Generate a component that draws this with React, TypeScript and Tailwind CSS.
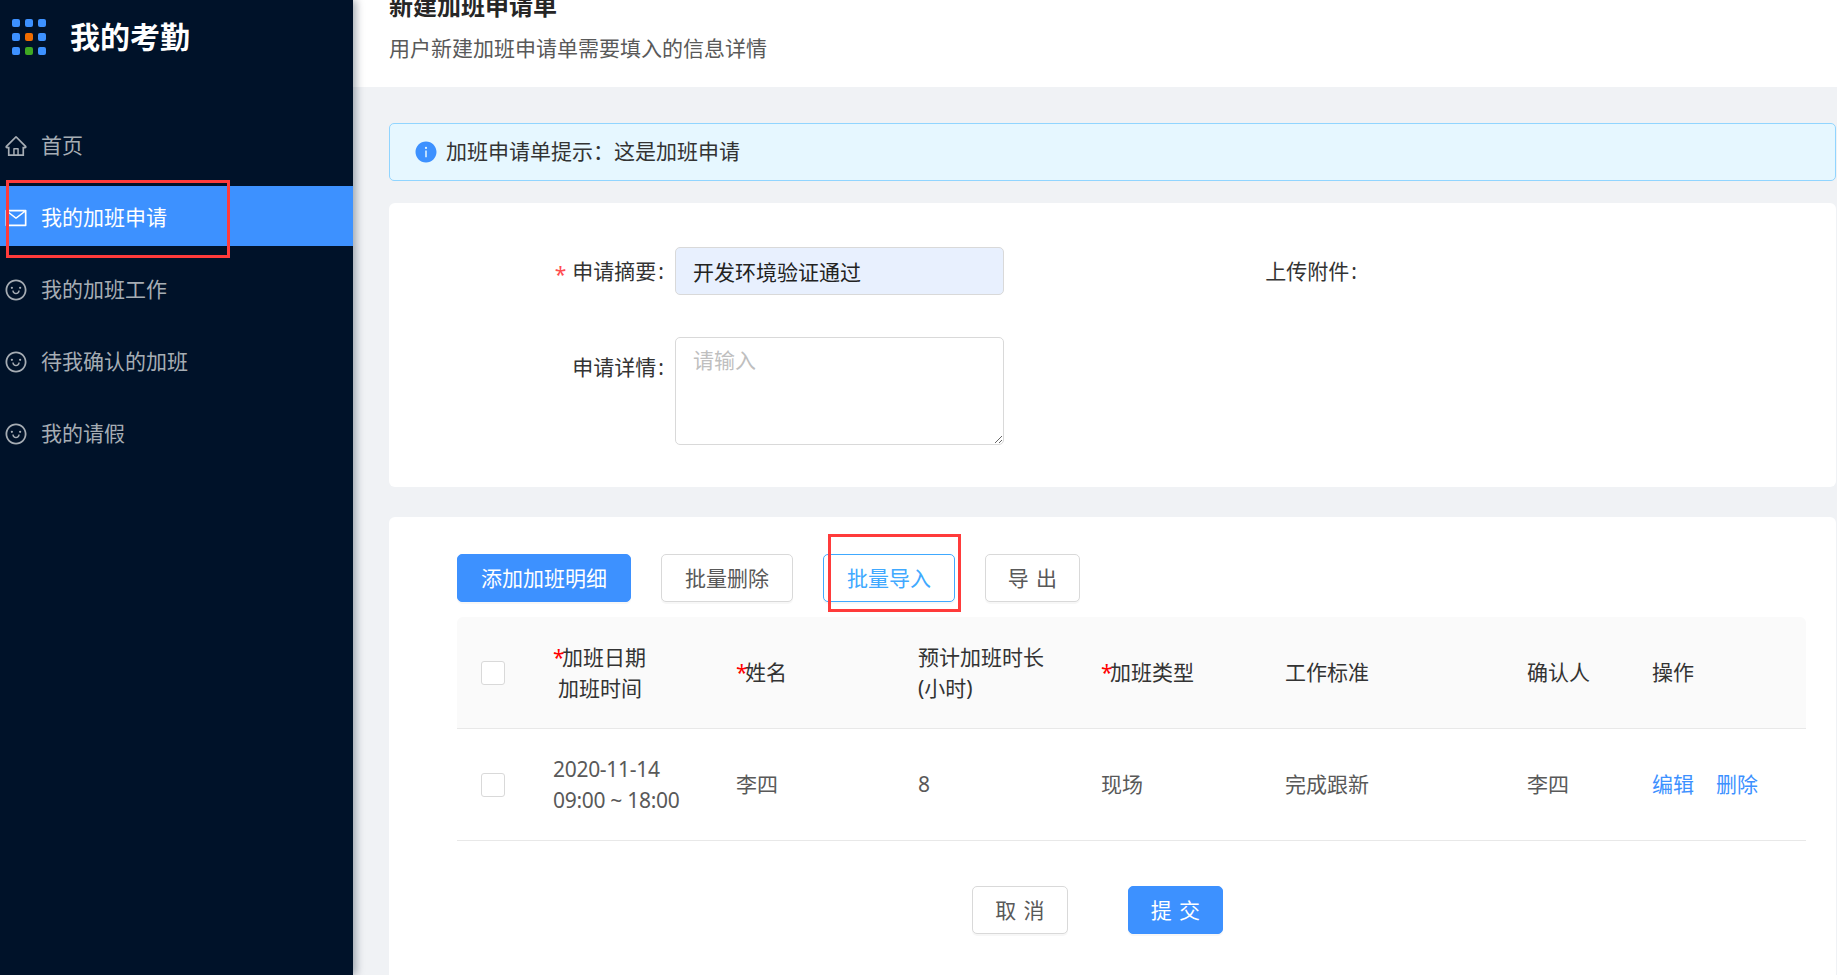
import React from "react";
import { AiOutlineHome, AiOutlineMail, AiOutlineSmile, AiFillInfoCircle } from "react-icons/ai";

const navItems = [
  { label: "首页", icon: AiOutlineHome },
  { label: "我的加班申请", icon: AiOutlineMail, active: true },
  { label: "我的加班工作", icon: AiOutlineSmile },
  { label: "待我确认的加班", icon: AiOutlineSmile },
  { label: "我的请假", icon: AiOutlineSmile },
];

const dots = [
  "bg-[#3d91ff]", "bg-[#3d91ff]", "bg-[#3d91ff]",
  "bg-[#3d91ff]", "bg-[#f06c00]", "bg-[#3d91ff]",
  "bg-[#3d91ff]", "bg-[#3fa822]", "bg-[#3d91ff]",
];

const rowGrid = "grid grid-cols-[72px_183px_182px_183px_184px_242px_125px_178px] items-center";

const Required = () => <span className="inline-block w-[9px] text-[#ff0000]">*</span>;

const Colon = () => <span className="ml-[2px]">:</span>;

const Checkbox = () => (
  <div className="ml-6 h-6 w-6 rounded-[3px] border border-[#d9d9d9] bg-white" />
);

const Button = ({ className, children }: { className: string; children: React.ReactNode }) => (
  <button className={`flex h-12 items-center justify-center rounded-[5px] border pt-[2px] text-[21px] shadow-[0_2px_0_rgba(0,0,0,0.03)] ${className}`}>
    {children}
  </button>
);

const Sidebar = () => (
  <aside className="relative z-10 flex h-full w-[353px] shrink-0 flex-col bg-[#001229] shadow-[3px_0_8px_rgba(0,21,41,0.35)]">
    <div className="flex h-[74px] items-center pl-3">
      <div className="grid grid-cols-[8px_8px_8px] gap-x-[5px] gap-y-[6px]">
        {dots.map((color, i) => (
          <span key={i} className={`h-2 w-2 rounded-[2px] ${color}`} />
        ))}
      </div>
      <span className="ml-[24px] text-[30px] font-bold leading-none text-white">我的考勤</span>
    </div>
    <nav className="mt-[40px] flex flex-col gap-3">
      {navItems.map(({ label, icon: Icon, active }) => (
        <div
          key={label}
          className={`flex h-[60px] items-center pl-[4px] pt-[3px] text-[21px] ${
            active ? "bg-[#3d91ff] text-white" : "text-[#a6adb4]"
          }`}
        >
          <Icon className="h-6 w-6" />
          <span className="ml-[13px]">{label}</span>
        </div>
      ))}
    </nav>
    <div className="absolute left-[6px] top-[180px] h-[78px] w-[224px] border-[3px] border-[#ff3b3b]" />
  </aside>
);

const FormCard = () => (
  <section className="mt-[22px] rounded-md bg-white pb-[42px] pt-[44px] text-[#333]">
    <div className="flex h-12 items-center text-[21px]">
      <label className="w-[275px] pt-[2px] text-right">
        <span className="mr-[6px] inline-block translate-y-[3px] text-[#ff4d4f]">*</span>申请摘要<Colon />
      </label>
      <input
        readOnly
        value="开发环境验证通过"
        className="ml-[11px] h-12 w-[329px] rounded-[5px] border border-[#d9d9d9] bg-[#e8f0fe] px-[17px] text-[21px] text-[#222] outline-none"
      />
      <label className="w-[353px] pt-[2px] text-right">上传附件<Colon /></label>
    </div>
    <div className="mt-[42px] flex items-start text-[21px]">
      <label className="mt-[15px] w-[275px] text-right">申请详情<Colon /></label>
      <textarea
        readOnly
        placeholder="请输入"
        className="ml-[11px] block h-[108px] w-[329px] resize-y rounded-[5px] border border-[#d9d9d9] bg-white px-[17px] py-[7px] text-[21px] leading-[31px] outline-none placeholder:text-[#bfbfbf]"
      />
    </div>
  </section>
);

const DetailTable = () => (
  <div className="mt-[15px] w-[1349px]">
    <div className={`${rowGrid} h-[112px] rounded-t-md border-b border-[#e8e8e8] bg-[#fafafa] text-[#333]`}>
      <Checkbox />
      <div className="pl-6 leading-[31px]">
        <div><Required />加班日期</div>
        <div className="pl-[5px]">加班时间</div>
      </div>
      <div className="pl-6"><Required />姓名</div>
      <div className="pl-6 leading-[31px]">
        <div>预计加班时长</div>
        <div>(小时)</div>
      </div>
      <div className="pl-6"><Required />加班类型</div>
      <div className="pl-6">工作标准</div>
      <div className="pl-6">确认人</div>
      <div className="pl-6">操作</div>
    </div>
    <div className={`${rowGrid} h-[112px] border-b border-[#e8e8e8] text-[#595959]`}>
      <Checkbox />
      <div className="pl-6 leading-[31px] tracking-[-0.3px]">
        <div>2020-11-14</div>
        <div>09:00 ~ 18:00</div>
      </div>
      <div className="pl-6">李四</div>
      <div className="pl-6">8</div>
      <div className="pl-6">现场</div>
      <div className="pl-6">完成跟新</div>
      <div className="pl-6">李四</div>
      <div className="flex gap-[22px] pl-6 text-[#3d91ff]">
        <span>编辑</span>
        <span>删除</span>
      </div>
    </div>
  </div>
);

export default function App() {
  return (
    <div className="flex h-[975px] w-[1837px] overflow-hidden bg-[#f0f2f5] font-['Noto_Sans','Noto_Sans_CJK_SC',sans-serif] text-[21px]">
      <Sidebar />
      <main className="min-w-0 flex-1 overflow-hidden">
        <header className="h-[87px] overflow-hidden bg-white pl-[36px]">
          <h1 className="-mt-[11px] text-[24px] font-bold leading-[33px] text-[#262626]">新建加班申请单</h1>
          <p className="mt-[11px] leading-[31px] text-[#595959]">用户新建加班申请单需要填入的信息详情</p>
        </header>
        <div className="ml-[36px] mr-px">
          <div className="mt-[36px] flex h-[58px] items-center rounded-[5px] border border-[#91d5ff] bg-[#e6f7ff] pl-[24px] text-[#333]">
            <AiFillInfoCircle className="h-6 w-6 text-[#3d91ff]" />
            <span className="ml-[8px]">{"加班申请单提示\uFF1A这是加班申请"}</span>
          </div>
          <FormCard />
          <section className="relative mt-[30px] h-[500px] rounded-t-md bg-white pl-[68px] pt-[37px]">
            <div className="flex">
              <Button className="w-[174px] border-[#3d91ff] bg-[#3d91ff] text-white">添加加班明细</Button>
              <Button className="ml-[30px] w-[132px] border-[#d9d9d9] bg-white text-[#595959]">批量删除</Button>
              <Button className="ml-[30px] w-[132px] border-[#40a9ff] bg-white text-[#40a9ff]">批量导入</Button>
              <Button className="ml-[30px] w-[95px] border-[#d9d9d9] bg-white pl-[7px] tracking-[0.34em] text-[#595959]">导出</Button>
            </div>
            <div className="absolute left-[439px] top-[17px] h-[78px] w-[133px] border-[3px] border-[#ff3b3b]" />
            <DetailTable />
            <div className="ml-[515px] mt-[45px] flex gap-[60px]">
              <Button className="w-24 border-[#d9d9d9] bg-white pl-[7px] tracking-[0.34em] text-[#595959]">取消</Button>
              <Button className="w-[95px] border-[#3d91ff] bg-[#3d91ff] pl-[7px] tracking-[0.34em] text-white">提交</Button>
            </div>
          </section>
        </div>
      </main>
    </div>
  );
}
